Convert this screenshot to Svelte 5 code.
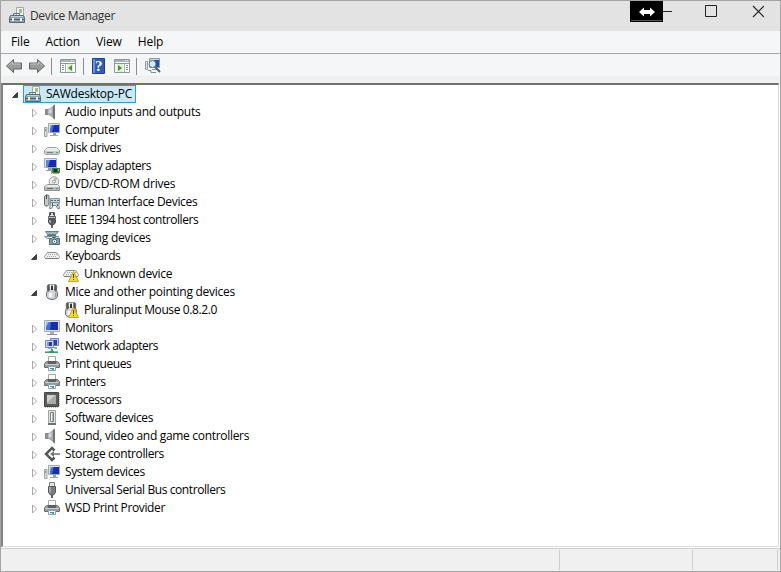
<script lang="ts">
  type Device = {
    label: string;
    icon: string;
    spacing: number;
    children?: Device[];
  };

  const menus = ["File", "Action", "View", "Help"];

  // spacing is the tracking of the label, in px
  const devices: Device[] = [
    { label: "Audio inputs and outputs", icon: "speaker", spacing: -0.27 },
    { label: "Computer", icon: "computer", spacing: -0.3 },
    { label: "Disk drives", icon: "disk", spacing: -0.42 },
    { label: "Display adapters", icon: "display", spacing: -0.45 },
    { label: "DVD/CD-ROM drives", icon: "dvd", spacing: -0.18 },
    { label: "Human Interface Devices", icon: "hid", spacing: -0.34 },
    { label: "IEEE 1394 host controllers", icon: "firewire", spacing: -0.45 },
    { label: "Imaging devices", icon: "imaging", spacing: -0.22 },
    {
      label: "Keyboards",
      icon: "keyboard",
      spacing: -0.44,
      children: [{ label: "Unknown device", icon: "keyboard", spacing: -0.3 }],
    },
    {
      label: "Mice and other pointing devices",
      icon: "mouse",
      spacing: -0.26,
      children: [
        { label: "Pluralinput Mouse 0.8.2.0", icon: "mouse", spacing: -0.38 },
      ],
    },
    { label: "Monitors", icon: "monitor", spacing: -0.36 },
    { label: "Network adapters", icon: "network", spacing: -0.47 },
    { label: "Print queues", icon: "printer", spacing: -0.4 },
    { label: "Printers", icon: "printer", spacing: -0.47 },
    { label: "Processors", icon: "cpu", spacing: -0.5 },
    { label: "Software devices", icon: "software", spacing: -0.38 },
    { label: "Sound, video and game controllers", icon: "speaker", spacing: -0.31 },
    { label: "Storage controllers", icon: "storage", spacing: -0.38 },
    { label: "System devices", icon: "computer", spacing: -0.36 },
    { label: "Universal Serial Bus controllers", icon: "usb", spacing: -0.41 },
    { label: "WSD Print Provider", icon: "printer", spacing: -0.38 },
  ];

  let open = $state<Record<string, boolean>>({
    Keyboards: true,
    "Mice and other pointing devices": true,
  });

  function toggle(label: string) {
    open[label] = !open[label];
  }
</script>

{#snippet icon(name: string, warning = false)}
  <svg class="icon" width="16" height="16" viewBox="0 0 16 16">
    {#if name == "manager"}
      <path fill="#f5f7ef" stroke="#a4aaa6" d="M7.5.5h7v10h-7z" />
      <path fill="#9bc48a" d="M10 2h3v4h-3z" />
      <path fill="none" stroke="#66727a" d="M4.5 8V6.5h6V8" />
      <path fill="#91a4b0" stroke="#596a77" d="M1.5 8.5h13l1 2v5H.5v-5z" />
      <path fill="#c4d1d8" d="M2 9h12v1H2z" />
      <path fill="#516370" d="M1 12h14v1H1z" />
      <path fill="#eef2f4" d="M3 11h2v3H3zM11 11h2v3h-2z" />
    {:else if name == "speaker"}
      <path fill="#8d9195" stroke="#6d7175" stroke-width=".8" d="M1.500 5.500H5v5H1.500z" />
      <path fill="#a9adb1" d="M4 5.500 11 .500v15l-7-5z" />
      <path fill="#6f7478" d="M9 2 11 .500v15L9 14z" />
      <path fill="#d6d9db" d="m4.500 6.500 3-2.500v5l-3 .500z" />
    {:else if name == "computer"}
      <path fill="#d9dcdd" stroke="#8b9093" stroke-width=".8" d="M.5 5.500h2.500v9H.5z" />
      <path fill="#74aa5b" d="M1 7h1v2H1z" />
      {@render screen()}
    {:else if name == "monitor"}
      <path fill="#dde2e5" stroke="#a6adb2" d="M.5.500h15v11H.5z" />
      <path fill="#152eb4" d="M2 2h12v8H2z" />
      <path fill="#3f6fe5" d="M2 2h5l-1 8H2z" />
      <path fill="#97b5ef" d="M2 2h3L2 7z" />
      <path fill="#a8adb1" d="M6 12h4v2H6z" />
      <path fill="#8c9297" d="M3 14h10v1H3z" />
    {:else if name == "disk"}
      <path fill="#eceded" stroke="#a0a3a4" stroke-linejoin="round" d="m3.500 7.500-3 3v3l1 1h13l1-1v-3l-3-3z" />
      <path fill="#c6c9ca" d="M1 11h14v3H1z" />
      <path fill="#777c7d" d="M3 12h6v1H3z" />
      <path fill="#58a65c" d="M12 12h2v1h-2z" />
    {:else if name == "display"}
      <path fill="#dde2e5" stroke="#a6adb2" d="M.5.500h12v9H.5z" />
      <path fill="#152eb4" d="M2 2h10v7H2z" />
      <path fill="#5c86e9" d="M2 2h4L4 9H2z" />
      <path fill="#929da1" d="M4 10h4v3H2v-1h2z" />
      <path fill="#377a4a" d="M8 10h8v5H8z" />
      <path fill="#192e28" d="M10 11h3v3h-3z" />
      <path fill="#98b99c" d="M7 9h1v7H7zM14 11h1v2h-1z" />
      <path fill="#b2a455" d="M9 15h6v1H9z" />
    {:else if name == "dvd"}
      <circle cx="10" cy="5.500" r="4.800" fill="#e9eceb" stroke="#9ba19e" />
      <path fill="#b5c9a5" d="m10 1 4 1-3 4z" />
      <circle cx="10" cy="5.500" r="1.500" fill="#fff" stroke="#90968f" />
      <path fill="#e9ebeb" stroke="#8e9292" d="m3.500 8.500-3 2v4h15v-4l-2-2z" />
      <path fill="#b5b9b9" d="M1 11h14v3H1z" />
      <path fill="#686d6e" d="M3 12h6v1H3z" />
      <path fill="#58a65c" d="M12 12h2v1h-2z" />
    {:else if name == "hid"}
      <path fill="#c4c8ca" stroke="#5d6366" d="M.5 2.500 2 1h2l1 1.500v8l-1.500 1.500h-2L.5 10.500z" />
      <path fill="#464b4e" d="M2 1h1v4H2z" />
      <path fill="#c4d5dd" stroke="#8599a3" d="M6.500 4.500h9v5h-9z" />
      <path fill="#5b707c" d="M7 6h2v1H7zM10 6h2v1h-2zM13 6h2v1h-2z" />
      <path fill="#d1dce2" stroke="#7b8d97" d="m6.500 8.500-1 6h2l1.500-3h3l1.500 3h2l-1-6z" />
      <path fill="#51616b" d="M8 9h1v3H8zM13 10h1v2h-1z" />
    {:else if name == "firewire"}
      <path fill="#dadddd" stroke="#5a5f60" d="M5.500.500h5v4h-5z" />
      <path fill="#3e4344" d="M6 1h1v2H6zM9 1h1v2H9z" />
      <path fill="#b9bdbd" stroke="#595d5e" d="M4.500 4.500h7v2h-7z" />
      <path fill="#575c5f" stroke="#4a4e50" d="M4.500 7.500h7v3l-1.500 2H6l-1.500-2z" />
      <path fill="#9da2a4" d="M5 8h2v3H6l-1-1z" />
      <path fill="#606567" d="M7 13h2v3H7z" />
    {:else if name == "usb"}
      <path fill="#e4e6e6" stroke="#7b8081" d="M5.500.500h5v4h-5z" />
      <path fill="#777c7e" stroke="#54595b" d="M4.500 4.500h7v6L9.500 13h-3l-2-2.500z" />
      <path fill="#a4a9ab" d="M5 5h2v6l-2-1z" />
      <path fill="#606567" d="M7 13h2v3H7z" />
    {:else if name == "imaging"}
      <path fill="#9fb9bd" stroke="#668287" d="M1.500 1.500h13l-2.500 3H3.500z" />
      <path fill="#5b777b" d="M3 5h9v1H3z" />
      <path fill="#dbe6e7" stroke="#779598" d="m.5 6.500 3 2h10l1-2z" />
      <path fill="#8ba3ab" stroke="#526d78" d="M5.500 8.500h2l1-1h3l1 1h3v6h-10z" />
      <circle cx="10.500" cy="11.500" r="2.300" fill="#eaf2f6" stroke="#41677c" />
      <path fill="#304d61" d="M10 11h1v1h-1z" />
    {:else if name == "keyboard"}
      <path fill="#eff0f0" stroke="#8f9495" stroke-linejoin="round" d="m3.500 4.500-3 4v1l1 1h13l1-1v-1l-3-4z" />
      <path fill="none" stroke="#a3a7a8" stroke-dasharray="1 1" d="M4 6.500h9M3 8.500h10" />
      <path fill="#767b7d" d="M1 10h14v1H1z" />
    {:else if name == "mouse"}
      <path fill="#d3d6d8" stroke="#6a7073" d="M4 .8Q2.500 2.500 3.500 6 2 9 2.500 12.500 3.500 15.500 8 15.500t5.500-3Q14 9 12.500 6q1-3.500-.500-5.200z" />
      <path fill="#54595c" d="M3.500 1h2L6 5.500 4.500 8 3.500 6zM12.500 1h-2L10 5.500 11.500 8l1-2z" />
      <path fill="#fafbfb" d="M6 1h1v4H6zM9 1h1v4H9zM5 9h3v4H5z" />
      <path fill="#2f3436" d="M7 2h2v4H7z" />
      <path fill="#9a9fa2" d="M11 9h1.500v4L11 14z" />
    {:else if name == "network"}
      <path fill="#b8ccec" stroke="#7082b7" d="M6.500.500h8v7h-8z" />
      <path fill="#263eb4" d="M8 2h5v5H8z" />
      <path fill="#d4e0f4" stroke="#7082b7" d="M1.500 2.500h8v7h-8z" />
      <path fill="#2039be" d="M3 4h5v4H3z" />
      <path fill="#7495e3" d="M3 4h2v4H3z" />
      <path fill="#9cadb9" d="M10 9h3v2h-3zM4 10h4v1H4z" />
      <path fill="#319e67" d="M7 11h2v2h5v2H1v-2h6z" />
      <path fill="#82d49f" d="M1 13h4v1H1zM10 13h4v1h-4z" />
    {:else if name == "printer"}
      <path fill="#fafafa" stroke="#a5a9aa" d="M4.500.500h7v6h-7z" />
      <path fill="#969b9f" stroke="#6b7073" stroke-linejoin="round" d="m2.500 5.500-2 2v4h15v-4l-2-2z" />
      <path fill="#5c6164" d="M4 5h8v3H4z" />
      <path fill="#c9cccd" d="M1 8h14v1H1z" />
      <path fill="#f5f8f9" stroke="#8ca3ad" d="M4.500 10.500h7v4h-7z" />
      <path fill="#478eb4" d="M6 12h4v1H6zM8 13h2v1H8z" />
    {:else if name == "cpu"}
      <path fill="none" stroke="#80765b" stroke-dasharray="1 1" d="M1 15h14M15 1v14" />
      <path fill="#5b5c5c" stroke="#454646" d="M.5.500h14v14H.5z" />
      <path fill="#a9abab" d="M3 3h9v9H3z" />
      <path fill="#d0d2d1" d="M3 3h8l-8 8z" />
    {:else if name == "software"}
      <path fill="#e1e4e2" stroke="#a2a6a4" d="M4.500.500h7v14h-7z" />
      <path fill="#fff" stroke="#7c817e" d="M6.500 2.500h3v9h-3z" />
      <path fill="#adb6ab" d="M8 3h1v8H8z" />
      <path fill="#6e7370" d="M4 13h8v2H4z" />
    {:else if name == "storage"}
      <path fill="none" stroke="#53585a" stroke-width="2.500" d="M10.500 4.500 8 2 2 8l6 6 2.500-2.500" />
      <path fill="#72777a" d="M9 7.200h7v1.600H9zM6 8l4-3v6z" />
    {/if}
    {#if warning}
      <path fill="#f8dc2c" stroke="#c9a51d" stroke-linejoin="round" d="m10.500 5.500-5 10h10z" />
      <path fill="#43390c" d="M10 8h1v4h-1zM10 13h1v1h-1z" />
    {/if}
  </svg>
{/snippet}

{#snippet screen()}
  <path fill="#dde2e5" stroke="#a0a9b1" d="M4.500 1.500h11v9h-11z" />
  <path fill="#152eb4" d="M6 3h9v7H6z" />
  <path fill="#446be0" d="M6 3h4l-2 7H6z" />
  <path fill="#8aaaf0" d="M6 3h2L6 7z" />
  <path fill="#9ca3a7" d="M9 11h3v2h2v1H6v-1h3z" />
{/snippet}

{#snippet expander(expanded: boolean)}
  <svg class="expander" width="7" height="10" viewBox="0 0 7 10">
    {#if expanded}
      <path fill="#404040" stroke="#262626" stroke-width=".8" d="M5.500 2.500v5H.5z" />
    {:else}
      <path fill="#fff" stroke="#a6a6a6" d="M1.500 1v8l4-4z" />
    {/if}
  </svg>
{/snippet}

{#snippet arrow(flip: boolean)}
  <svg class:flip width="16" height="16" viewBox="0 0 16 16">
    <path fill="#9b9b9b" stroke="#626262" stroke-linejoin="round" d="m.5 8 7-6.500V5h8v6h-8v3.500z" />
    <path fill="none" stroke="#c2c2c2" d="m2.500 7.500 4-3.500v2h8" />
  </svg>
{/snippet}

{#snippet pane(flip: boolean)}
  <svg class="pane" width="16" height="14" viewBox="0 0 16 14">
    <path fill="#fbfcfc" stroke="#8d969d" d="M.5.500h15v13H.5z" />
    <path fill="#aab2b9" d="M1 1h14v2H1z" />
    <path fill="#eef1f3" d="M11 1h1v1h-1zM13 1h1v1h-1z" />
    <path fill="#8d969d" d="M1 4h14v1H1z" />
    <g class:flip>
      <path fill="#a6afb5" d="M5 5h1v8H5z" />
      <path fill="#7d8b94" d="M2 6h2v1H2zM2 8h2v1H2zM2 10h2v1H2z" />
      <path fill="#e2f0d6" d="M7 5h6v8H7z" />
      <path fill="#46962b" d="M12 6v6L8 9z" />
    </g>
  </svg>
{/snippet}

<div class="window">
  <header class="titlebar">
    {@render icon("manager")}
    <span class="title">Device Manager</span>
    <div class="resize">
      <svg width="16" height="10" viewBox="0 0 16 10">
        <path fill="#fff" d="m0 5 5-4.500V3h6V.500L16 5l-5 4.500V7H5v2.500z" />
      </svg>
    </div>
    <svg class="controls" width="101" height="14" viewBox="0 0 101 14">
      <path fill="none" stroke="#222" d="M0 6.500h9M42.500.500h11v11h-11z" />
      <path fill="none" stroke="#222" stroke-width="1.100" d="m90 1 11 11M101 1 90 12" />
    </svg>
  </header>

  <nav class="menubar">
    {#each menus as menu}
      <span>{menu}</span>
    {/each}
  </nav>

  <div class="toolbar">
    {@render arrow(false)}
    {@render arrow(true)}
    <i class="separator"></i>
    {@render pane(false)}
    <i class="separator"></i>
    <svg class="help" width="13" height="16" viewBox="0 0 13 16">
      <path fill="#315bc0" stroke="#203f91" d="M.5.500h12v15H.5z" />
      <path fill="#6b91dc" d="M1 1h2v14H1z" />
      <text x="3" y="13">?</text>
    </svg>
    {@render pane(true)}
    <i class="separator"></i>
    <svg width="17" height="16" viewBox="0 0 17 16">
      <path fill="#dfe2e4" stroke="#969da1" d="M.5 3.500h2v8h-2z" />
      <path fill="#cbd5dd" stroke="#8799a6" d="M4.500.500h10v9h-10z" />
      <path fill="#244bb8" d="M9 2h5v7H9z" />
      <path fill="#8c9ba5" d="M7 11h7v1H7z" />
      <circle cx="7.500" cy="6" r="3.500" fill="#d6edf8" stroke="#58778c" />
      <path stroke="#545d64" stroke-width="2" d="m10 9 5 5" />
      <path fill="none" stroke="#78919e" d="M3 12.500h3v2h5" />
    </svg>
  </div>

  <main class="tree">
    <div class="row root">
      {@render expander(true)}
      <span class="selected">
        {@render icon("manager")}
        <span class="label">SAWdesktop-PC</span>
      </span>
    </div>
    {#each devices as device}
      <!-- svelte-ignore a11y_click_events_have_key_events -->
      <!-- svelte-ignore a11y_no_static_element_interactions -->
      <div class="row" onclick={() => toggle(device.label)}>
        {@render expander(!!open[device.label])}
        {@render icon(device.icon)}
        <span class="label" style:letter-spacing="{device.spacing}px">{device.label}</span>
      </div>
      {#if open[device.label]}
        {#each device.children ?? [] as child}
          <div class="row child">
            {@render icon(child.icon, true)}
            <span class="label" style:letter-spacing="{child.spacing}px">{child.label}</span>
          </div>
        {/each}
      {/if}
    {/each}
  </main>

  <footer class="statusbar">
    <div class="cell main"></div>
    <div class="cell"></div>
    <div class="cell last"></div>
  </footer>
</div>

<style>
  :global(body) {
    margin: 0;
  }

  .window {
    display: flex;
    flex-direction: column;
    box-sizing: border-box;
    width: 781px;
    height: 572px;
    border: 1px solid #a4a4a4;
    background: #f0f0f0;
    color: #000;
    font: 12px/18px "Open Sans", "Noto Sans", sans-serif;
    letter-spacing: -0.22px;
    white-space: nowrap;
    cursor: default;
  }

  svg {
    display: block;
    flex: none;
  }

  .titlebar {
    display: flex;
    align-items: flex-start;
    height: 30px;
    padding-left: 8px;
    background: #e3e3e3;
  }

  .titlebar .icon {
    margin-top: 6px;
  }

  .title {
    flex: 1;
    margin: 6px 0 0 5px;
    color: #333;
    letter-spacing: -0.34px;
  }

  .resize {
    display: flex;
    align-items: center;
    justify-content: center;
    box-sizing: border-box;
    width: 33px;
    height: 21px;
    border: 1px solid #000;
    background: #000;
    box-shadow: inset 0 -1px #555;
  }

  .controls {
    margin: 4px 16px 0 0;
  }

  .menubar {
    display: flex;
    gap: 16px;
    box-sizing: border-box;
    height: 23px;
    padding: 2px 10px 0;
    border-bottom: 1px solid #a8a9aa;
    background: #f5f6f7;
    letter-spacing: -0.12px;
  }

  .toolbar {
    display: flex;
    align-items: center;
    box-sizing: border-box;
    height: 29px;
    padding-left: 5px;
    border-bottom: 7px solid #f0f0f0;
    background: #f5f6f7;
  }

  .toolbar > svg {
    margin-top: 2px;
  }

  .toolbar > svg + svg {
    margin-left: 7px;
  }

  .toolbar > .help + .pane {
    margin-left: 9px;
  }

  .separator {
    width: 1px;
    height: 17px;
    margin: 2px 8px 0 6px;
    background: #8c8c8c;
  }

  .separator + .pane {
    margin-right: 1px;
  }

  .flip {
    transform: scaleX(-1);
    transform-origin: center;
  }

  g.flip {
    transform-origin: 8px 7px;
  }

  .help text {
    fill: #fff;
    font: bold 15px "Liberation Serif", serif;
  }

  .tree {
    flex: 1;
    border: 2px solid #828282;
    border-top-color: #707070;
    border-right: 1px solid #dcdcdc;
    border-bottom: 1px solid #dcdcdc;
    margin-right: 1px;
    background: #fff;
    box-shadow: 1px 1px #fff;
  }

  .row {
    display: flex;
    align-items: center;
    height: 18px;
    padding-left: 28px;
  }

  .root {
    padding-left: 9px;
  }

  .child {
    padding-left: 60px;
  }

  .expander {
    margin: 2px 6px 0 0;
  }

  .root .expander {
    margin-right: 4px;
  }

  .label {
    margin-left: 5px;
  }

  .selected {
    display: flex;
    align-items: center;
    box-sizing: border-box;
    height: 18px;
    padding: 0 3px 0 1px;
    border: 1px solid #26a0da;
    background: #cbe8f6;
  }

  .statusbar {
    display: flex;
    height: 22px;
    margin-top: 1px;
    border-top: 1px solid #cfcfcf;
  }

  .cell {
    box-sizing: border-box;
    width: 133px;
    height: 20px;
    margin-top: 1px;
    border-right: 1px solid #cdcdcd;
  }

  .main {
    width: 559px;
  }

  .last {
    width: 85px;
  }
</style>
